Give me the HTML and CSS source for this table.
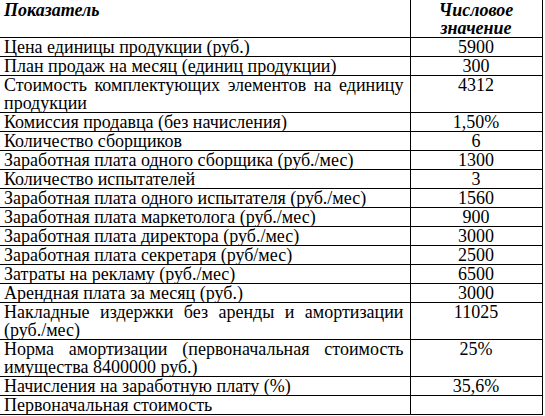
FILE: index.html
```html
<!DOCTYPE html>
<html lang="ru">
<head>
<meta charset="utf-8">
<link rel="stylesheet" href="styles.css">
</head>
<body>
<table class="data">
  <colgroup><col class="c-name"><col class="c-val"></colgroup>
  <thead>
    <tr>
      <th class="h-name">Показатель</th>
      <th class="h-val">Числовое значение</th>
    </tr>
  </thead>
  <tbody>
    <tr><td>Цена единицы продукции (руб.)</td><td>5900</td></tr>
    <tr><td>План продаж на месяц (единиц продукции)</td><td>300</td></tr>
    <tr><td>Стоимость комплектующих элементов на единицу продукции</td><td>4312</td></tr>
    <tr><td>Комиссия продавца (без начисления)</td><td>1,50%</td></tr>
    <tr><td>Количество сборщиков</td><td>6</td></tr>
    <tr><td>Заработная плата одного сборщика (руб./мес)</td><td>1300</td></tr>
    <tr><td>Количество испытателей</td><td>3</td></tr>
    <tr><td>Заработная плата одного испытателя (руб./мес)</td><td>1560</td></tr>
    <tr><td>Заработная плата маркетолога (руб./мес)</td><td>900</td></tr>
    <tr><td>Заработная плата директора (руб./мес)</td><td>3000</td></tr>
    <tr><td>Заработная плата секретаря (руб/мес)</td><td>2500</td></tr>
    <tr><td>Затраты на рекламу (руб./мес)</td><td>6500</td></tr>
    <tr><td>Арендная плата за месяц (руб.)</td><td>3000</td></tr>
    <tr><td>Накладные издержки без аренды и амортизации (руб./мес)</td><td>11025</td></tr>
    <tr><td>Норма амортизации (первоначальная стоимость имущества 8400000 руб.)</td><td>25%</td></tr>
    <tr><td>Начисления на заработную плату (%)</td><td>35,6%</td></tr>
    <tr><td>Первоначальная стоимость</td><td></td></tr>
  </tbody>
</table>
</body>
</html>
```
FILE: styles.css
```css
body {
  margin: 0;
  padding: 0;
  background: #ffffff;
  color: #000;
}
.data {
  font-family: "Times New Roman", serif;
  font-size: 18px;
  border-collapse: collapse;
  width: 542px;
  table-layout: fixed;
}
.c-name { width: 410px; }
.c-val { width: 132px; }
.data th {
  font-weight: bold;
  font-style: italic;
  vertical-align: top;
  line-height: 18px;
  padding: 1px 4px 0 4px;
  height: 33px;
}
.h-name {
  text-align: left;
  border: none;
}
.h-val {
  text-align: center;
  border-left: 1px solid #000;
  border-right: 1px solid #000;
  border-bottom: 1px solid #000;
}
.data thead tr { border-bottom: 1px solid #000; }
.data td {
  border-top: 1px solid #000;
  border-bottom: 1px solid #000;
  line-height: 18px;
  padding: 0 6px 0 4px;
  vertical-align: top;
}
.data td:first-child {
  text-align: justify;
  border-right: 1px solid #000;
}
.data td:last-child {
  text-align: center;
  padding: 0 4px;
  border-right: 1px solid #000;
}
```
